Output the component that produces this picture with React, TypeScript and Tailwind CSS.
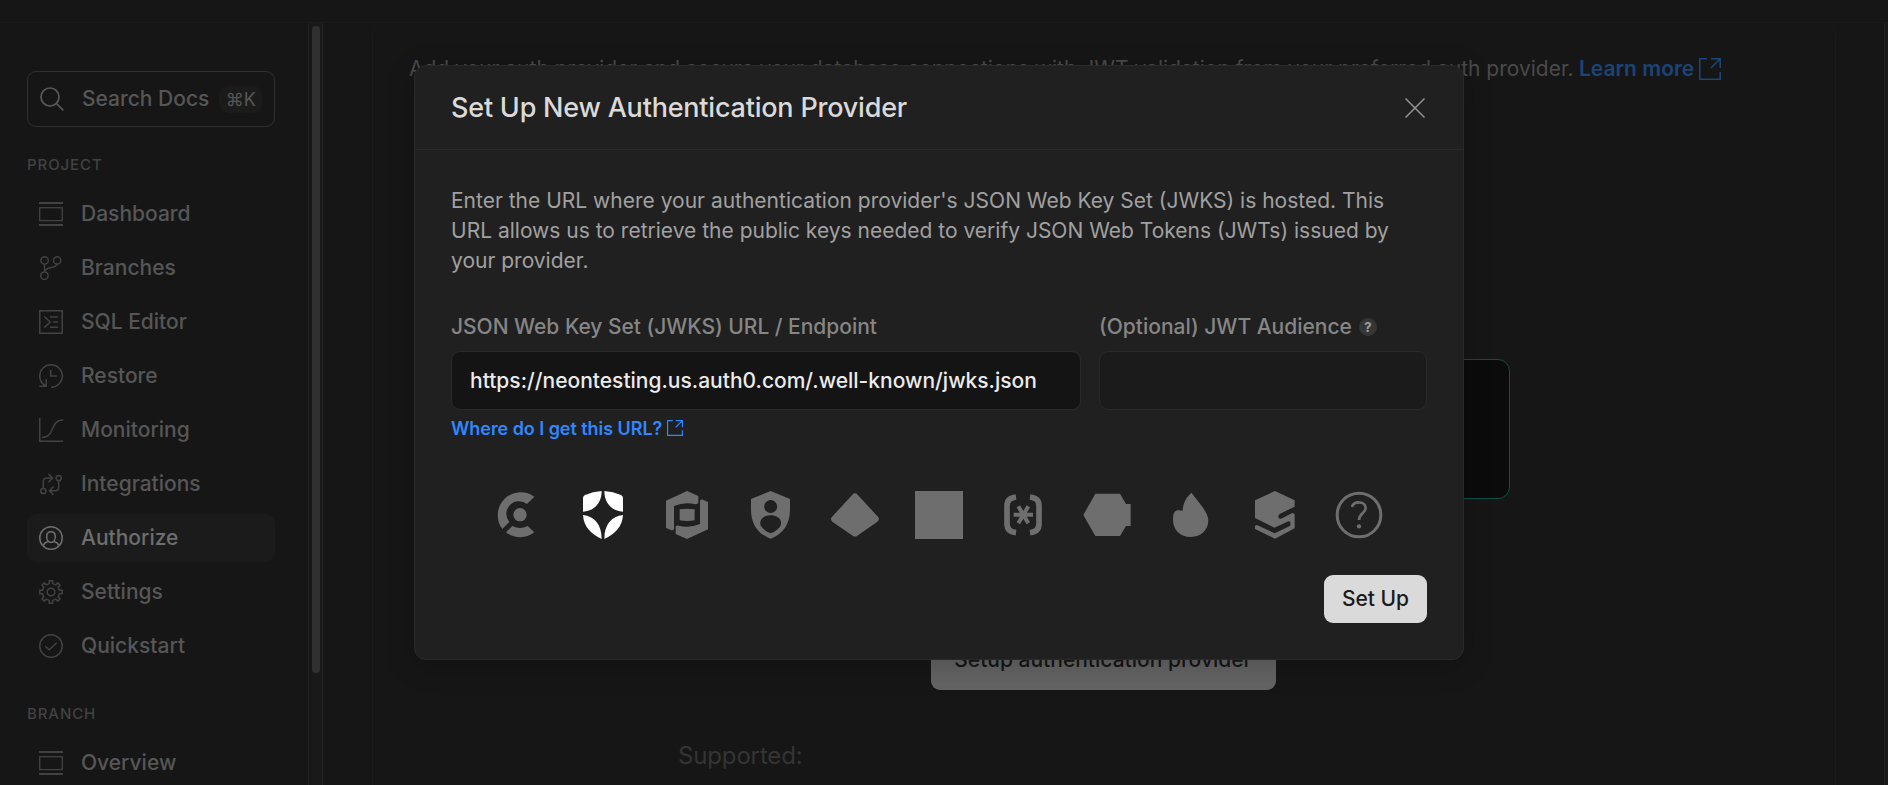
import type { ReactNode } from "react";

const FONT = "font-['Inter','Liberation_Sans',sans-serif]";

function gearPath() {
  const points: string[] = [];
  for (let i = 0; i < 8; i++) {
    const base = (i * Math.PI) / 4;
    const corners: [number, number][] = [
      [8.6, -0.2],
      [11.3, -0.15],
      [11.3, 0.15],
      [8.6, 0.2],
    ];
    corners.forEach(([r, a]) => {
      points.push(`${(12 + r * Math.cos(base + a)).toFixed(2)} ${(12 + r * Math.sin(base + a)).toFixed(2)}`);
    });
  }
  return `M${points.join("L")}Z`;
}

function NavIcon({ children }: { children: ReactNode }) {
  return (
    <svg viewBox="0 0 24 24" className="size-6 shrink-0" fill="none" stroke="currentColor" strokeWidth="1.5">
      {children}
    </svg>
  );
}

const windowIcon = (
  <NavIcon>
    <path d="M0 1H24M0 23H24" strokeWidth="1.8" />
    <rect x=".7" y="5.7" width="22.6" height="12.9" strokeWidth="1.3" />
  </NavIcon>
);

const projectItems: { label: string; icon: ReactNode; active?: boolean }[] = [
  { label: "Dashboard", icon: windowIcon },
  {
    label: "Branches",
    icon: (
      <NavIcon>
        <circle cx="5.6" cy="4.4" r="3.7" />
        <circle cx="18.2" cy="4.4" r="3.7" />
        <circle cx="5.4" cy="19.7" r="3.7" />
        <path d="M5.5 8v8M18.2 8C18 12.6 6.5 10.5 5.5 15.5" />
      </NavIcon>
    ),
  },
  {
    label: "SQL Editor",
    icon: (
      <NavIcon>
        <rect x=".75" y=".75" width="22.5" height="22.5" />
        <path d="M5.2 6.5L11.3 12L5.2 17.6M11 7H19M14 12H19M11 17.2H19" />
      </NavIcon>
    ),
  },
  {
    label: "Restore",
    icon: (
      <NavIcon>
        <path d="M12 23.3A11.3 11.3 0 1 0 .7 12C.7 16 2.8 19.6 6.8 22M7.2 15V22.3H.3M11.7 6V12H18" />
      </NavIcon>
    ),
  },
  {
    label: "Monitoring",
    icon: (
      <NavIcon>
        <path d="M.75 0V23.25H24M3 19.4C16.5 19.4 10.5 2 24 2" />
      </NavIcon>
    ),
  },
  {
    label: "Integrations",
    icon: (
      <NavIcon>
        <circle cx="19.7" cy="6" r="2.6" />
        <circle cx="4.3" cy="19" r="2.6" />
        <path d="M4.3 16.3V9.5Q4.3 6 8 6H13M9.5 2L13.5 6L9.5 10.2M19.7 8.7V15.2Q19.7 18.7 16 18.7H11M14.5 14.5L10.5 18.7L14.5 23" />
      </NavIcon>
    ),
  },
  {
    label: "Authorize",
    active: true,
    icon: (
      <NavIcon>
        <circle cx="12" cy="12" r="11.25" />
        <path d="M12 5.8C14.9 5.8 16.3 7.8 16.3 10.6C16.3 13.8 14.5 16.5 12 16.5C9.5 16.5 7.7 13.8 7.7 10.6C7.7 7.8 9.1 5.8 12 5.8ZM4.3 19.5C5 17.3 7 16 9.2 15.5M19.7 19.5C19 17.3 17 16 14.8 15.5" />
      </NavIcon>
    ),
  },
  {
    label: "Settings",
    icon: (
      <NavIcon>
        <path d={gearPath()} />
        <circle cx="12" cy="12" r="3.8" />
      </NavIcon>
    ),
  },
  {
    label: "Quickstart",
    icon: (
      <NavIcon>
        <circle cx="12" cy="12" r="11.25" />
        <path d="M6.3 12.3L10.3 15.8L17.6 8.8" />
      </NavIcon>
    ),
  },
];

function NavItem({ label, icon, active }: { label: string; icon: ReactNode; active?: boolean }) {
  return (
    <li
      className={`flex h-12 items-center gap-[18px] rounded-[9px] px-3 ${
        active ? "bg-[#1b1b1b] text-[#6e6e6e]" : "text-[#424242]"
      }`}
    >
      {icon}
      <span className={`text-[21px] leading-6 font-medium ${active ? "text-[#6e6e6e]" : "text-[#565656]"}`}>{label}</span>
    </li>
  );
}

function ExternalIcon({ className }: { className: string }) {
  return (
    <svg viewBox="0 0 22 22" className={className} fill="none" stroke="currentColor" strokeWidth="1.6">
      <path d="M8 .8H.8V21.2H21.2V14M12 .8H21.2V10M21.2 .8L12 10" />
    </svg>
  );
}

function Sidebar() {
  return (
    <aside className="flex w-[323px] shrink-0 justify-between border-r border-[#232323]">
      <nav className="w-[275px] pl-[27px] pt-12">
        <div className="flex h-14 items-center rounded-[9px] border border-[#303030] pl-3">
          <svg viewBox="0 0 24 24" className="size-6 text-[#5a5a5a]" fill="none" stroke="currentColor" strokeWidth="1.7">
            <circle cx="10" cy="10" r="9" />
            <path d="M16.5 16.5L23.3 23.3" />
          </svg>
          <span className="ml-[18px] text-[21px] font-medium text-[#565656]">Search Docs</span>
          <kbd className="ml-[10px] flex h-[27px] w-[43px] items-center justify-center rounded-[9px] bg-[#1b1b1b] font-['Inter','DejaVu_Sans',sans-serif] text-[18px] text-[#565656]">
            ⌘K
          </kbd>
        </div>
        <h2 className="mt-[27px] h-[21px] text-[15px] leading-[21px] font-medium tracking-[0.9px] text-[#424242]">PROJECT</h2>
        <ul className="mt-[15px] flex flex-col gap-[6px]">
          {projectItems.map((item) => (
            <NavItem key={item.label} {...item} />
          ))}
        </ul>
        <h2 className="mt-[33px] h-[21px] text-[15px] leading-[21px] font-medium tracking-[0.9px] text-[#424242]">BRANCH</h2>
        <ul className="mt-[15px]">
          <NavItem label="Overview" icon={windowIcon} />
        </ul>
      </nav>
      <div className="flex w-[14px] justify-center border-l border-[#212121] bg-[#191919] pt-[3px]">
        <div className="h-[647px] w-2 rounded-full bg-[#303030]" />
      </div>
    </aside>
  );
}

function MainPanel() {
  return (
    <main className="flex min-w-0 flex-1 justify-between pl-[49px]">
      <section className="flex h-[900px] w-[1464px] flex-col items-center rounded-t-[12px] border-x border-[#1b1b1b] pt-[31px]">
        <p className="flex w-full items-center pl-9 text-[21px] leading-[30px] whitespace-nowrap text-[#4a4a4a]">
          <span className="w-[1170px]">
            Add your auth provider and secure your database connections with JWT validation from your preferred auth provider.
          </span>
          <a className="font-semibold text-[#1b4478]">Learn more</a>
          <ExternalIcon className="ml-[5px] size-[22px] text-[#1b4478]" />
        </p>
        <div className="mt-[275px] h-[140px] w-[812px] rounded-[12px] border border-[#0c5048] bg-[#0b0b0b]" />
        <button className="mt-[131px] mr-[2px] h-[60px] w-[345px] rounded-[9px] bg-[#646464] text-[21px] font-medium text-[#161616]">
          Setup authentication provider
        </button>
        <p className="mt-[51px] w-[852px] text-[24px] leading-[30px] tracking-[-0.15px] text-[#343434]">Supported:</p>
      </section>
      <div className="w-1 border-l border-[#212121] bg-[#1a1a1a]" />
    </main>
  );
}

function ProviderIcon({ children, selected }: { children: ReactNode; selected?: boolean }) {
  return (
    <svg viewBox="0 0 144 144" className={`size-12 ${selected ? "text-white" : "text-[#6e6e6e]"}`} fill="currentColor">
      {children}
    </svg>
  );
}

function ProviderList() {
  return (
    <div className="mt-[50px] flex justify-center gap-9">
      <ProviderIcon>
        <circle cx="75" cy="71" r="20" />
        <path d="M118 17L96 39A38 38 0 0 0 43 93L22 114A69 69 0 0 1 118 17Z" />
        <path d="M33 124L52 105Q75 117 98 105L118 124A69 69 0 0 1 33 124Z" />
      </ProviderIcon>
      <ProviderIcon selected>
        <path d="M68 0C68 36 46 60 12 62V21Q12 15 18 12Q42 2 68 0ZM76 0C76 36 98 60 132 62V21Q132 15 126 12Q102 2 76 0ZM12 72C46 76 68 100 68 144C36 128 14 108 12 72ZM132 72C98 76 76 100 76 144C108 128 130 108 132 72Z" />
      </ProviderIcon>
      <ProviderIcon>
        <path d="M9 29L72 0L106 15V36Q102 40 98 40Q64 32 33 45V115Q29 119 24 117L9 111Z" />
        <path d="M135 115L72 144L38 129V106Q42 103 46 104Q80 112 111 99V29Q115 24 120 26L135 33Z" />
        <path d="M50 55Q72 51 95 55V88Q72 92 50 88Z" />
      </ProviderIcon>
      <ProviderIcon>
        <path
          fillRule="evenodd"
          d="M71 0L129 24V56C129 98 108 130 71 143C33 130 12 98 12 56V24ZM71 27A19.5 19.5 0 1 0 71 66A19.5 19.5 0 1 0 71 27ZM71 73C56 73 42 80 40 93V102C46 114 58 122 71 127C84 122 96 114 102 102V93C100 80 86 73 71 73Z"
        />
      </ProviderIcon>
      <ProviderIcon>
        <path d="M80 11L142 79Q147 86 139 92L79 134Q72 139 65 134L4 92Q-3 86 2 79L64 11Q72 3 80 11Z" />
      </ProviderIcon>
      <ProviderIcon>
        <path d="M0 0H144V144H0Z" />
      </ProviderIcon>
      <ProviderIcon>
        <g fill="none" stroke="currentColor" strokeWidth="17">
          <path d="M51 18C34 20 24 29 24 44V99C24 114 34 123 51 125M93 18C110 20 120 29 120 44V99C120 114 110 123 93 125" />
          <path d="M44 71.5H102M58 46L88 97M88 46L58 97" strokeWidth="12" />
        </g>
      </ProviderIcon>
      <ProviderIcon>
        <path d="M1 72L37 8H111L129 39H143V105H129L111 135H37Z" />
      </ProviderIcon>
      <ProviderIcon>
        <path d="M74 5C86 24 124 62 124 88C124 117 102 138 71 138C40 138 18 117 18 86C18 72 20 66 23 62C30 56 38 57 47 59C48 38 56 20 74 5Z" />
      </ProviderIcon>
      <ProviderIcon>
        <path d="M72 0L131 28V47L86 69Q82 72 82 77Q82 84 90 83L124 66L131 69V112L72 143L12 114V104L18 102L71 127L118 104V92L112 91L70 110L12 81V28Z" />
      </ProviderIcon>
      <ProviderIcon>
        <g fill="none" stroke="currentColor">
          <circle cx="72" cy="72" r="65.5" strokeWidth="9" />
          <path d="M51 48C53 39 61 34 71 34C84 34 92 42 92 51C92 67 72 67 72 87" strokeWidth="8" />
        </g>
        <circle cx="72" cy="106" r="6.5" />
      </ProviderIcon>
    </div>
  );
}

function Modal() {
  return (
    <div className="absolute inset-0 flex items-start justify-center pt-[65px] pr-[10px]">
      <div
        role="dialog"
        className="h-[595px] w-[1050px] rounded-[12px] border border-[#2a2a2a] bg-[#202020] shadow-[0_6px_30px_rgba(0,0,0,0.2)]"
      >
        <header className="flex h-[84px] items-center justify-between border-b border-[#2a2a2a] px-9">
          <h1 className="text-[27px] leading-8 font-medium tracking-[-0.21px] text-[#dadada]">Set Up New Authentication Provider</h1>
          <svg viewBox="0 0 24 24" className="size-6 text-[#949494]" fill="none" stroke="currentColor" strokeWidth="1.5">
            <path d="M2.5 2.5L21.5 21.5M21.5 2.5L2.5 21.5" />
          </svg>
        </header>
        <div className="px-9 pt-9">
          <p className="text-[21px] leading-[30px] whitespace-nowrap text-[#a1a1a1]">
            Enter the URL where your authentication provider's JSON Web Key Set (JWKS) is hosted. This
            <br />
            URL allows us to retrieve the public keys needed to verify JSON Web Tokens (JWTs) issued by
            <br />
            your provider.
          </p>
          <div className="mt-9 grid grid-cols-[630px_328px] gap-[18px]">
            <div>
              <label className="block text-[21px] leading-[30px] font-medium tracking-[-0.03px] text-[#868686]">
                JSON Web Key Set (JWKS) URL / Endpoint
              </label>
              <div className="mt-[9px] flex h-[59px] items-center rounded-[9px] border border-[#2a2a2a] bg-[#141414] px-[18px] text-[21px] font-medium text-[#ebebeb]">
                https://neontesting.us.auth0.com/.well-known/jwks.json
              </div>
              <a className="mt-[5px] flex h-[26px] items-center gap-[5px] text-[18px] font-semibold tracking-[-0.05px] text-[#2f88ff]">
                Where do I get this URL?
                <ExternalIcon className="size-[16px]" />
              </a>
            </div>
            <div>
              <div className="flex h-[30px] items-center text-[21px] leading-[30px] font-medium text-[#868686]">
                (Optional) JWT Audience
                <span className="ml-[7px] flex size-[18px] items-center justify-center rounded-full bg-[#363636] text-[13px] font-bold text-[#a1a1a1]">
                  ?
                </span>
              </div>
              <div className="mt-[9px] h-[59px] rounded-[9px] border border-[#2a2a2a] bg-[#1b1b1b]" />
            </div>
          </div>
          <ProviderList />
          <div className="mt-9 flex justify-end">
            <button className="h-12 w-[103px] rounded-[9px] bg-[#dadada] text-[21px] font-medium text-[#1b1b1b]">
              Set Up
            </button>
          </div>
        </div>
      </div>
    </div>
  );
}

export default function App() {
  return (
    <div className={`relative flex h-[785px] w-[1888px] flex-col overflow-hidden bg-[#161616] ${FONT}`}>
      <div className="h-[23px] shrink-0 border-b border-[#1b1b1b]" />
      <div className="flex min-h-0 flex-1">
        <Sidebar />
        <MainPanel />
      </div>
      <Modal />
    </div>
  );
}
